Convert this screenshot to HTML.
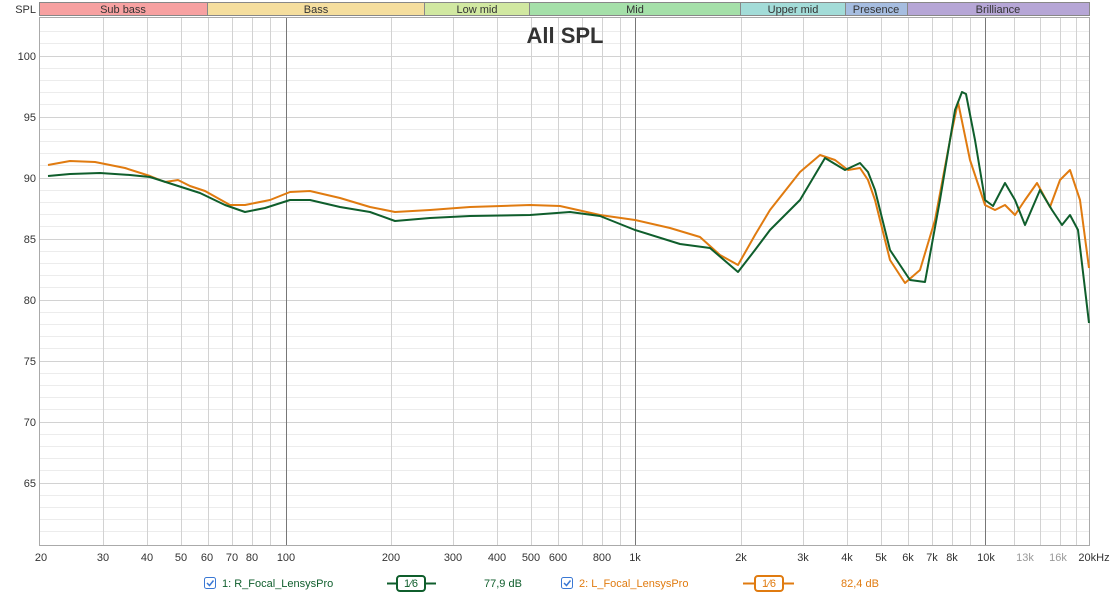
<!DOCTYPE html>
<html><head><style>
body{margin:0;background:#fff;width:1110px;height:595px;overflow:hidden;font-family:"Liberation Sans",sans-serif}
svg{display:block}
</style></head><body>
<svg width="1110" height="595" xmlns="http://www.w3.org/2000/svg" font-family="Liberation Sans, sans-serif">
<g font-size="11" fill="#333">
<text x="36" y="13" text-anchor="end">SPL</text>
</g>
<g stroke="#888" stroke-width="1" font-size="11" text-anchor="middle" fill="#333">
<rect x="39.5" y="2.5" width="168" height="13" fill="#f7a1a1"/>
<rect x="207.5" y="2.5" width="217" height="13" fill="#f5de9e"/>
<rect x="424.5" y="2.5" width="105" height="13" fill="#d1e8a1"/>
<rect x="529.5" y="2.5" width="211" height="13" fill="#a5e0a9"/>
<rect x="740.5" y="2.5" width="105" height="13" fill="#a3dcd8"/>
<rect x="845.5" y="2.5" width="62" height="13" fill="#a6bde0"/>
<rect x="907.5" y="2.5" width="182" height="13" fill="#b6a6d6"/>
</g>
<g font-size="11" text-anchor="middle" fill="#333">
<text x="123" y="13">Sub bass</text><text x="316" y="13">Bass</text><text x="477" y="13">Low mid</text><text x="635" y="13">Mid</text><text x="793" y="13">Upper mid</text><text x="876" y="13">Presence</text><text x="998" y="13">Brilliance</text>
</g>
<g stroke="#ececec" stroke-width="1">
<path d="M39 31.5H1089M39 43.5H1089M39 68.5H1089M39 80.5H1089M39 92.5H1089M39 104.5H1089M39 129.5H1089M39 141.5H1089M39 153.5H1089M39 165.5H1089M39 190.5H1089M39 202.5H1089M39 214.5H1089M39 226.5H1089M39 251.5H1089M39 263.5H1089M39 275.5H1089M39 287.5H1089M39 312.5H1089M39 324.5H1089M39 336.5H1089M39 348.5H1089M39 373.5H1089M39 385.5H1089M39 397.5H1089M39 409.5H1089M39 434.5H1089M39 446.5H1089M39 458.5H1089M39 470.5H1089M39 495.5H1089M39 507.5H1089M39 519.5H1089M39 531.5H1089"/>
</g>
<g stroke="#d2d2d2" stroke-width="1">
<path d="M39 56.5H1089M39 117.5H1089M39 178.5H1089M39 239.5H1089M39 300.5H1089M39 361.5H1089M39 422.5H1089M39 483.5H1089"/>
<path d="M103.5 17V545M147.5 17V545M181.5 17V545M208.5 17V545M232.5 17V545M252.5 17V545M270.5 17V545M391.5 17V545M453.5 17V545M497.5 17V545M531.5 17V545M558.5 17V545M582.5 17V545M602.5 17V545M620.5 17V545M741.5 17V545M803.5 17V545M847.5 17V545M881.5 17V545M908.5 17V545M932.5 17V545M952.5 17V545M970.5 17V545M1014.5 17V545M1040.5 17V545M1060.5 17V545M1076.5 17V545"/>
</g>
<g stroke="#777" stroke-width="1"><path d="M286.5 17V545M635.5 17V545M985.5 17V545"/></g>
<rect x="39.5" y="17.5" width="1050" height="528" fill="none" stroke="#aaa"/>
<text x="565" y="43" font-size="22" font-weight="bold" text-anchor="middle" fill="#333">All SPL</text>
<g font-size="11" fill="#333" text-anchor="end">
<text x="36" y="60">100</text><text x="36" y="121">95</text><text x="36" y="182">90</text><text x="36" y="243">85</text><text x="36" y="304">80</text><text x="36" y="365">75</text><text x="36" y="426">70</text><text x="36" y="487">65</text>
</g>
<g font-size="11" fill="#333" text-anchor="middle">
<text x="41" y="561">20</text><text x="103" y="561">30</text><text x="147" y="561">40</text><text x="181" y="561">50</text><text x="207" y="561">60</text><text x="232" y="561">70</text><text x="252" y="561">80</text><text x="286" y="561">100</text><text x="391" y="561">200</text><text x="453" y="561">300</text><text x="497" y="561">400</text><text x="531" y="561">500</text><text x="558" y="561">600</text><text x="602" y="561">800</text><text x="635" y="561">1k</text><text x="741" y="561">2k</text><text x="803" y="561">3k</text><text x="847" y="561">4k</text><text x="881" y="561">5k</text><text x="908" y="561">6k</text><text x="932" y="561">7k</text><text x="952" y="561">8k</text><text x="986" y="561">10k</text><text x="1025" y="561" fill="#999">13k</text><text x="1058" y="561" fill="#999">16k</text><text x="1094" y="561">20kHz</text>
</g>
<polyline fill="none" stroke="#e07b10" stroke-width="2" stroke-linejoin="round" points="48,165 70,161 95,162 125,168 150,176 165,182 178,180 190,186 205,191 230,205 245,205 270,200 290,192 310,191 340,198 370,207 395,212 430,210 470,207 530,205 560,206 600,215 635,220 670,228 700,237 720,255 738,265 755,235 770,210 800,172 820,155 835,160 848,170 860,168 868,180 875,200 890,260 905,283 920,270 935,220 950,140 958,102 970,160 985,205 995,210 1005,205 1015,215 1025,200 1037,183 1050,207 1060,180 1070,170 1080,200 1089,268"/>
<polyline fill="none" stroke="#0f5e2c" stroke-width="2" stroke-linejoin="round" points="48,176 70,174 100,173 130,175 150,177 175,185 200,193 225,205 245,212 265,208 290,200 310,200 340,207 370,212 395,221 430,218 470,216 530,215 570,212 600,216 635,230 680,244 710,248 738,272 755,250 770,230 800,200 825,158 845,170 860,163 868,172 875,190 890,250 910,280 925,282 940,200 955,110 962,92 966,94 975,140 985,200 993,206 1005,183 1015,200 1025,225 1040,190 1052,210 1062,225 1070,215 1078,230 1089,323"/>
<g font-size="11">
<rect x="204.5" y="577.5" width="11" height="11" rx="2" fill="#fff" stroke="#3a78d4"/><path d="M207 583l2.5 2.5 4-5" stroke="#3a78d4" fill="none" stroke-width="1.5"/>
<text x="222" y="587" fill="#0f5e2c">1: R_Focal_LensysPro</text>
<path d="M387 583.5H397M425 583.5H436" stroke="#0f5e2c" stroke-width="2"/>
<rect x="397" y="576" width="28" height="15" rx="3" fill="#fff" stroke="#0f5e2c" stroke-width="2"/>
<text x="411" y="587" text-anchor="middle" fill="#0f5e2c">1⁄6</text>
<text x="484" y="587" fill="#0f5e2c">77,9 dB</text>
<rect x="561.5" y="577.5" width="11" height="11" rx="2" fill="#fff" stroke="#3a78d4"/><path d="M564 583l2.5 2.5 4-5" stroke="#3a78d4" fill="none" stroke-width="1.5"/>
<text x="579" y="587" fill="#e07b10">2: L_Focal_LensysPro</text>
<path d="M743 583.5H755M783 583.5H794" stroke="#e07b10" stroke-width="2"/>
<rect x="755" y="576" width="28" height="15" rx="3" fill="#fff" stroke="#e07b10" stroke-width="2"/>
<text x="769" y="587" text-anchor="middle" fill="#e07b10">1⁄6</text>
<text x="841" y="587" fill="#e07b10">82,4 dB</text>
</g>
</svg>
</body></html>
